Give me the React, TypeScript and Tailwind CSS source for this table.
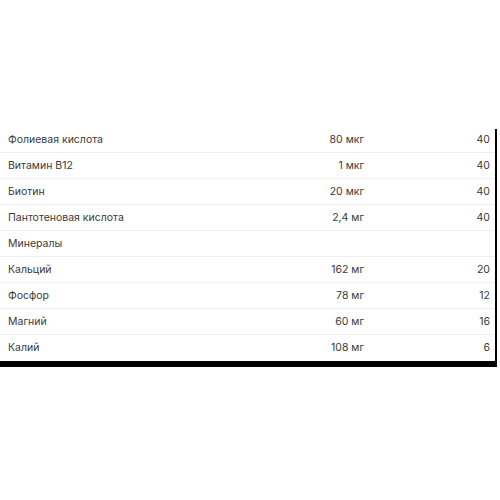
import React from "react";

const rows: [string, string, string][] = [
  ["Фолиевая кислота", "80 мкг", "40"],
  ["Витамин B12", "1 мкг", "40"],
  ["Биотин", "20 мкг", "40"],
  ["Пантотеновая кислота", "2,4 мг", "40"],
  ["Минералы", "", ""],
  ["Кальций", "162 мг", "20"],
  ["Фосфор", "78 мг", "12"],
  ["Магний", "60 мг", "16"],
  ["Калий", "108 мг", "6"],
];

export default function App() {
  return (
    <div className="w-[500px] h-[500px] bg-white pt-[127px]" style={{ fontFamily: "Inter, 'Noto Sans', sans-serif" }}>
      <div className="w-[497px] relative">
        <div className="absolute right-0 top-[2px] bottom-0 w-[2px] bg-black" />
        {rows.map((r, i) => (
          <div
            key={i}
            className={`flex items-center h-[26px] pl-[8px] pr-[7px] text-[10.5px] text-[#3a3a3a] ${i < rows.length - 1 ? "border-b border-[#eeeeee]" : ""}`}
          >
            <div className="flex-1">{r[0]}</div>
            <div className="w-[120px] text-right">{r[1]}</div>
            <div className="w-[126px] text-right">{r[2]}</div>
          </div>
        ))}
      </div>
      <div className="w-[497px] h-[6px] bg-black" />
    </div>
  );
}
